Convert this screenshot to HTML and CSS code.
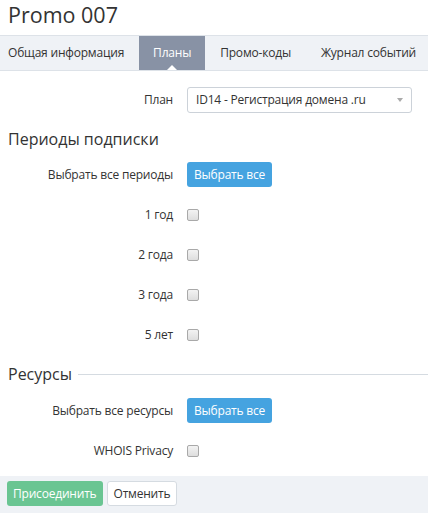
FILE: index.html
```html
<!DOCTYPE html>
<html lang="ru">
<head>
  <meta charset="UTF-8">
  <title>Promo 007</title>
  <link rel="stylesheet" href="styles.css">
</head>
<body>

  <h1 class="page-title">Promo 007</h1>

  <div class="tabs">
    <a class="tab">Общая информация</a>
    <a class="tab active">Планы</a>
    <a class="tab">Промо-коды</a>
    <a class="tab">Журнал событий</a>
  </div>

  <form class="plan-form">
    <div class="form-row plan-row">
      <label class="row-label" for="plan">План</label>
      <div class="select" id="plan">
        <span>ID14 - Регистрация домена .ru</span>
        <span class="caret"></span>
      </div>
    </div>

    <h2 class="section-title">Периоды подписки</h2>

    <div class="form-row">
      <span class="row-label">Выбрать все периоды</span>
      <button type="button" class="btn btn-blue">Выбрать все</button>
    </div>
    <div class="form-row">
      <span class="row-label">1 год</span>
      <span class="check"></span>
    </div>
    <div class="form-row">
      <span class="row-label">2 года</span>
      <span class="check"></span>
    </div>
    <div class="form-row">
      <span class="row-label">3 года</span>
      <span class="check"></span>
    </div>
    <div class="form-row">
      <span class="row-label">5 лет</span>
      <span class="check"></span>
    </div>

    <h2 class="section-title with-line">Ресурсы</h2>

    <div class="form-row">
      <span class="row-label">Выбрать все ресурсы</span>
      <button type="button" class="btn btn-blue">Выбрать все</button>
    </div>
    <div class="form-row">
      <span class="row-label">WHOIS Privacy</span>
      <span class="check"></span>
    </div>
  </form>

  <div class="footer">
    <button type="button" class="btn btn-green">Присоединить</button>
    <button type="button" class="btn btn-white">Отменить</button>
  </div>

</body>
</html>
```

FILE: styles.css
```css
body {
  margin: 0;
  font-family: "Open Sans", Arial, sans-serif;
  font-size: 12px;
  letter-spacing: -0.2px;
  color: #333;
  background-color: #fff;
}

.page-title {
  margin: 0;
  padding: 0 8px;
  height: 35px;
  font-size: 21.5px;
  font-weight: normal;
  letter-spacing: 0;
  line-height: 30px;
  color: #333;
}

.tabs {
  display: flex;
  height: 34px;
  background-color: #eff2f6;
  border-top: 1px solid #dde2e8;
  border-bottom: 1px solid #dde2e8;
}

.tab {
  position: relative;
  padding: 0 15px;
  line-height: 34px;
  color: #333;
  white-space: nowrap;
}

.tab:first-child {
  padding-left: 8px;
}

.tab.active {
  padding: 0 14px;
  background-color: #8892a5;
  color: #fff;
}

.tab.active::after {
  content: "";
  position: absolute;
  left: 50%;
  bottom: 0;
  margin-left: -5px;
  border-left: 5px solid transparent;
  border-right: 5px solid transparent;
  border-bottom: 5px solid #fff;
}

.plan-form {
  padding: 0 8px;
}

.form-row {
  display: flex;
  align-items: center;
  height: 25px;
  margin-bottom: 15px;
}

.plan-row {
  margin-top: 16px;
  margin-bottom: 15px;
}

.row-label {
  width: 165px;
  margin-right: 14px;
  text-align: right;
  white-space: nowrap;
}

.select {
  display: flex;
  align-items: center;
  justify-content: space-between;
  box-sizing: border-box;
  width: 225px;
  height: 26px;
  padding: 0 8px 0 8px;
  border: 1px solid #ccd2d9;
  border-radius: 3px;
  background-color: #fff;
}

.caret {
  border-left: 3.5px solid transparent;
  border-right: 3.5px solid transparent;
  border-top: 4px solid #aaa;
}

.section-title {
  margin: 0 0 11px;
  height: 24px;
  font-size: 16px;
  font-weight: normal;
  letter-spacing: 0;
  line-height: 24px;
  color: #333;
}

.section-title.with-line {
  display: flex;
  align-items: center;
  margin-top: 15px;
  margin-right: -8px;
  margin-bottom: 12px;
}

.section-title.with-line::after {
  content: "";
  flex: 1;
  height: 1px;
  margin-left: 6px;
  background-color: #d5dbe1;
}

.check {
  box-sizing: border-box;
  width: 12px;
  height: 12px;
  border: 1px solid #a9a9a9;
  border-radius: 2px;
  background: linear-gradient(#f3f3f3, #dedede);
}

.btn {
  height: 25px;
  padding: 0 7px;
  border: none;
  border-radius: 3px;
  font-family: "Open Sans", Arial, sans-serif;
  font-size: 12px;
  letter-spacing: -0.2px;
  cursor: pointer;
}

.btn-blue {
  background-color: #45a3e0;
  color: #fff;
}

.btn-green {
  padding: 0 6px;
  background-color: #6ac592;
  color: #fff;
}

.btn-white {
  padding: 0 6px;
  background-color: #fff;
  color: #333;
  border: 1px solid #d5dbe1;
}

.footer {
  display: flex;
  gap: 4px;
  margin-top: -2px;
  padding: 5px 7px 8px;
  background-color: #eff2f6;
}
```
